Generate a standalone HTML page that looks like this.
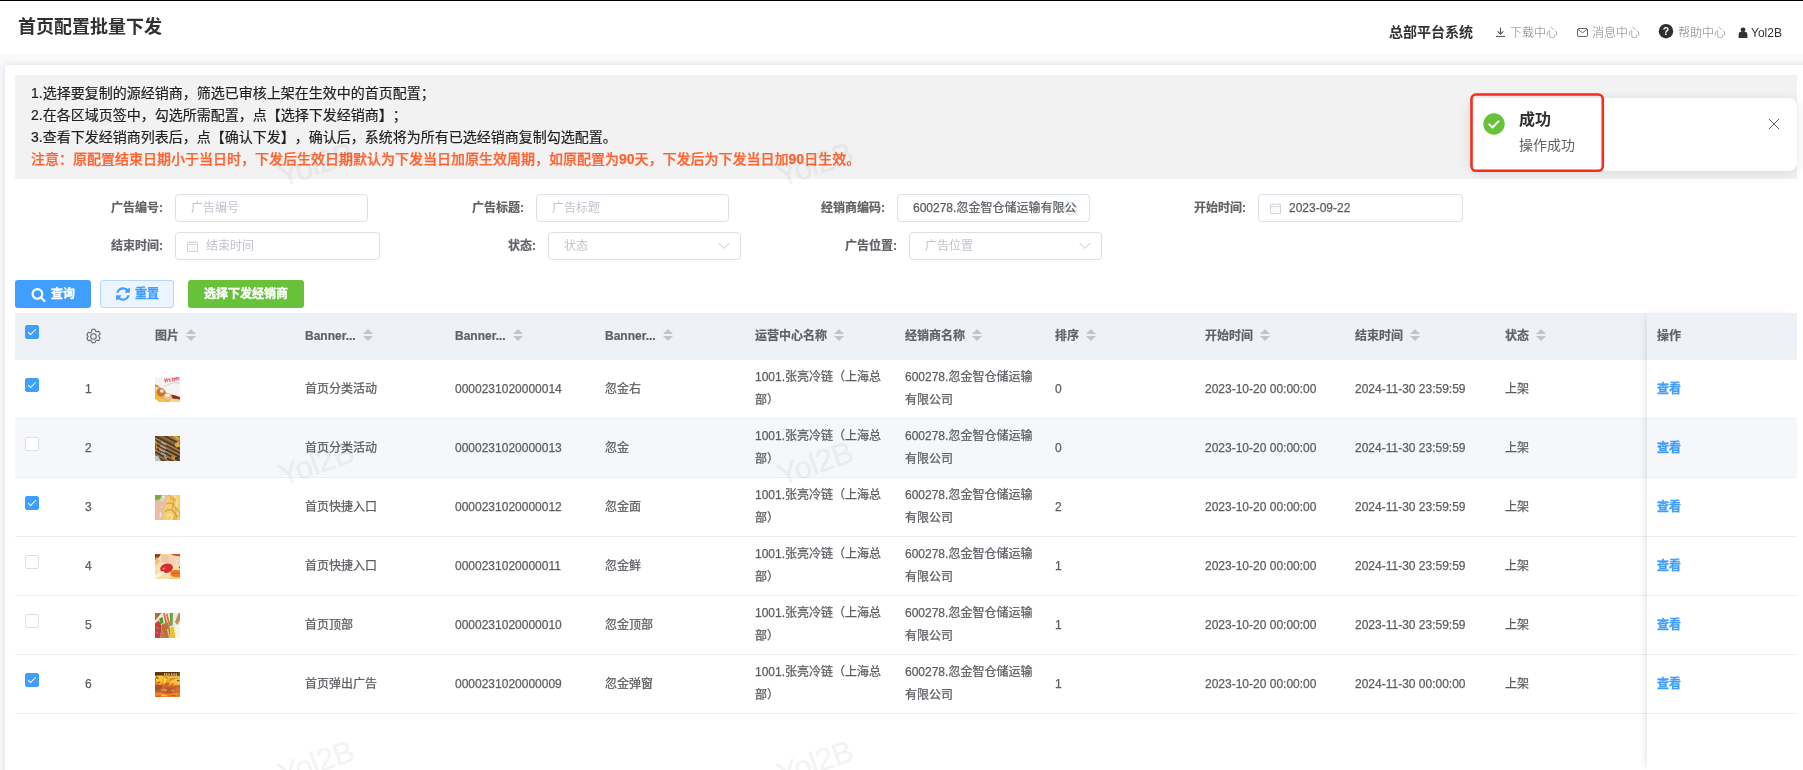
<!DOCTYPE html>
<html lang="zh-CN">
<head>
<meta charset="utf-8">
<title>首页配置批量下发</title>
<style>
*{box-sizing:border-box;margin:0;padding:0}
html,body{width:1803px;height:770px;overflow:hidden;background:#fff}
body{text-spacing-trim:space-all;font-family:"Liberation Sans","Noto Sans CJK SC",sans-serif;font-size:12px;color:#606266;position:relative}
#app{position:absolute;left:0;top:0;width:1803px;height:770px;overflow:hidden;will-change:transform;background:#fff}
.abs{position:absolute}
#topline{left:0;top:0;width:1803px;height:1px;background:#000}
#hdr{left:0;top:1px;width:1803px;height:53px;background:#fff}
#band{left:0;top:54px;width:1803px;height:11px;background:#f8f9fb}
#leftbg{left:0;top:65px;width:5px;height:705px;background:#f8f9fb}
#card{left:5px;top:65px;width:1810px;height:720px;background:#fff;border-radius:4px;box-shadow:0 0 6px rgba(70,80,120,.16)}
#title{left:18px;top:14px;font-size:18px;font-weight:700;color:#303133;line-height:26px;white-space:nowrap}
.hitem{top:25px;line-height:16px;font-size:12px;white-space:nowrap;color:#7d7d7d;font-weight:300}
#sysname{left:1389px;top:23px;font-size:14px;font-weight:700;color:#303133;line-height:18px;white-space:nowrap}
#notice{left:15px;top:75px;width:1782px;height:104px;background:#f2f2f2}
#notice p{position:absolute;left:16px;font-size:14px;line-height:22px;color:#1f1f1f;white-space:nowrap;-webkit-text-stroke:.2px #1f1f1f}
#notice p.warn{color:#ff6330;font-weight:500;-webkit-text-stroke:.25px #ff6330}
.lbl{-webkit-text-stroke:.2px #606266;font-weight:700;color:#606266;font-size:12px;line-height:28px;text-align:right;white-space:nowrap}
.inp{height:28px;border:1px solid #dcdfe6;border-radius:4px;background:#fff;font-size:12px;line-height:26px;color:#c0c4cc;white-space:nowrap;overflow:hidden}
.inp.val{color:#5c5e62;-webkit-text-stroke:.25px #5c5e62}
.btn{-webkit-text-stroke:.3px currentColor;top:280px;height:28px;border-radius:3px;font-size:12px;font-weight:700;line-height:28px;white-space:nowrap;text-align:center}
#thead{left:15px;top:313px;width:1782px;height:47px;background:#eef1f6;border-bottom:1px solid #ebeef5}
.th{-webkit-text-stroke:.2px #606266;top:0;height:46px;line-height:46px;font-weight:700;font-size:12px;color:#606266;white-space:nowrap}
.row{left:15px;width:1782px;height:59px;border-bottom:1px solid #ebeef5}
.row.hov{background:#f5f7fa}
.c{position:absolute;font-size:12px;color:#5c5e62;line-height:23px;white-space:nowrap;-webkit-text-stroke:.25px #5c5e62}
.c1{top:18px}
.c2{top:6px}
.cb{position:absolute;left:10px;width:14px;height:14px;border:1px solid #dcdfe6;border-radius:2px;background:#fff}
.cb.on{background:#409eff;border-color:#409eff}
.cb.on:after{content:"";position:absolute;left:4px;top:1px;width:3px;height:7px;border:1px solid #fff;border-left:0;border-top:0;transform:rotate(45deg)}
.sort{display:inline-block;position:relative;width:10px;height:14px;vertical-align:middle;margin-left:7px;top:-1.5px}
.sort:before,.sort:after{content:"";position:absolute;left:0;border:5px solid transparent}
.sort:before{top:-4px;border-bottom-color:#c0c4cc}
.sort:after{top:8px;border-top-color:#c0c4cc}
#fixed{left:1647px;top:313px;width:150px;height:457px;background:transparent;box-shadow:-4px 0 8px -4px rgba(0,0,0,.15)}
.lnk{color:#409eff;font-weight:700;-webkit-text-stroke:.3px #409eff}
.wm{position:absolute;width:80px;text-align:center;font-size:31px;letter-spacing:-.4px;color:rgba(0,0,0,.042);-webkit-text-stroke:.4px rgba(0,0,0,.042);transform:rotate(-19deg);transform-origin:50% 50%;white-space:nowrap;pointer-events:none;line-height:32px}
</style>
</head>
<body>
<div id="app">
<div id="topline" class="abs"></div>
<div id="hdr" class="abs"></div>
<div id="band" class="abs"></div>
<div id="leftbg" class="abs"></div>
<div id="card" class="abs"></div>

<div id="title" class="abs">首页配置批量下发</div>
<div id="sysname" class="abs">总部平台系统</div>
<div class="abs hitem" style="left:1510px">下载中心</div>
<div class="abs hitem" style="left:1592px">消息中心</div>
<div class="abs hitem" style="left:1678px">帮助中心</div>
<div class="abs hitem" style="left:1751px;color:#303133;font-weight:400">Yol2B</div>

<svg class="abs" style="left:1495px;top:27px" width="11" height="11" viewBox="0 0 11 11" fill="none" stroke="#555" stroke-width="1.1"><path d="M5.5 0.8v6.2M2.6 4.3l2.9 2.9 2.9-2.9M1 9.5h9"/></svg>
<svg class="abs" style="left:1576px;top:27px" width="13" height="11" viewBox="0 0 13 11" fill="none" stroke="#666" stroke-width="1"><rect x="1.5" y="1.5" width="10" height="8" rx="1.5"/><path d="M2 2.4l4.5 3.4L11 2.4"/></svg>
<svg class="abs" style="left:1658px;top:23px" width="16" height="16" viewBox="0 0 16 16"><circle cx="8" cy="8.2" r="7.2" fill="#2f2f2f"/><text x="8" y="12" font-family="Liberation Sans, sans-serif" font-weight="700" font-size="10.5" text-anchor="middle" fill="#fff">?</text></svg>
<svg class="abs" style="left:1738px;top:27px" width="10" height="11" viewBox="0 0 10 11" fill="#333"><circle cx="5" cy="2.8" r="2.4"/><path d="M0.6 10.8V7.4q0-2.2 2.2-2.6h4.4q2.2.4 2.2 2.6v3.4q0 .2-.4.2H1q-.4 0-.4-.2z"/></svg>
<div id="notice" class="abs">
<p style="top:7px">1.选择要复制的源经销商，筛选已审核上架在生效中的首页配置；</p>
<p style="top:29px">2.在各区域页签中，勾选所需配置，点【选择下发经销商】；</p>
<p style="top:51px">3.查看下发经销商列表后，点【确认下发】，确认后，系统将为所有已选经销商复制勾选配置。</p>
<p class="warn" style="top:73px">注意：原配置结束日期小于当日时，下发后生效日期默认为下发当日加原生效周期，如原配置为<b>90</b>天，下发后为下发当日加<b>90</b>日生效。</p>
</div>

<!-- FILTERS -->
<div id="filters">
<div class="abs lbl" style="left:63px;top:194px;width:100px">广告编号:</div>
<div class="abs inp" style="left:175px;top:194px;width:193px;padding-left:15px">广告编号</div>
<div class="abs lbl" style="left:424px;top:194px;width:100px">广告标题:</div>
<div class="abs inp" style="left:536px;top:194px;width:193px;padding-left:15px">广告标题</div>
<div class="abs lbl" style="left:785px;top:194px;width:100px">经销商编码:</div>
<div class="abs inp val" style="left:897px;top:194px;width:193px;padding-left:15px"><span style="display:block;width:163.5px;overflow:hidden">600278.忽金智仓储运输有限公司</span><svg class="abs" style="left:163px;top:5px" width="18" height="18" viewBox="0 0 18 18" fill="none" stroke="#cfdbe8" stroke-width="1"><circle cx="9.6" cy="8.5" r="6.2"/><path d="M14 12.900l2.700 2.700"/></svg></div>
<div class="abs lbl" style="left:1146px;top:194px;width:100px">开始时间:</div>
<div class="abs inp val" style="left:1258px;top:194px;width:205px;padding-left:30px">2023-09-22<svg class="abs" style="left:11px;top:8px" width="11" height="11" viewBox="0 0 11 11" fill="none" stroke="#cdd0d8" stroke-width=".9"><rect x=".500" y="1.300" width="10" height="9.200" rx=".400"/><path d="M.500 3.600h10M2.700 .300v1.600M8.300 .300v1.600"/><path d="M3 5.400v1M5.500 5.400v1M8 5.400v1M3 7.600v1M5.500 7.600v1M8 7.600v1" stroke-width=".8" stroke="#d8dbe1"/></svg></div>
<div class="abs lbl" style="left:63px;top:232px;width:100px">结束时间:</div>
<div class="abs inp" style="left:175px;top:232px;width:205px;padding-left:30px">结束时间<svg class="abs" style="left:11px;top:8px" width="11" height="11" viewBox="0 0 11 11" fill="none" stroke="#cdd0d8" stroke-width=".9"><rect x=".500" y="1.300" width="10" height="9.200" rx=".400"/><path d="M.500 3.600h10M2.700 .300v1.600M8.300 .300v1.600"/><path d="M3 5.400v1M5.500 5.400v1M8 5.400v1M3 7.600v1M5.500 7.600v1M8 7.600v1" stroke-width=".8" stroke="#d8dbe1"/></svg></div>
<div class="abs lbl" style="left:436px;top:232px;width:100px">状态:</div>
<div class="abs inp" style="left:548px;top:232px;width:193px;padding-left:15px">状态<svg class="abs" style="left:168.5px;top:8.500px" width="12" height="8" viewBox="0 0 12 8" fill="none" stroke="#c4c7cf" stroke-width="1"><path d="M.600 1l5.400 5.400L11.400 1"/></svg></div>
<div class="abs lbl" style="left:797px;top:232px;width:100px">广告位置:</div>
<div class="abs inp" style="left:909px;top:232px;width:193px;padding-left:15px">广告位置<svg class="abs" style="left:168.5px;top:8.500px" width="12" height="8" viewBox="0 0 12 8" fill="none" stroke="#c4c7cf" stroke-width="1"><path d="M.600 1l5.400 5.400L11.400 1"/></svg></div>
</div>
<!-- BUTTONS -->
<div id="buttons">
<div class="abs btn" style="left:15px;width:76px;background:#409eff;color:#fff;padding-left:20px"><svg class="abs" style="left:15.500px;top:6.500px" width="15" height="15" viewBox="0 0 1792 1792" fill="#fff"><path d="M1216 832q0-185-131.500-316.500t-316.500-131.500-316.500 131.500-131.500 316.500 131.500 316.500 316.500 131.500 316.500-131.500 131.500-316.500zm512 832q0 52-38 90t-90 38q-54 0-90-38l-343-342q-179 124-399 124-143 0-273.500-55.500t-225-150-150-225-55.500-273.500 55.500-273.500 150-225 225-150 273.500-55.500 273.500 55.500 225 150 150 225 55.500 273.500q0 220-124 399l343 343q37 37 37 90z"/></svg>查询</div>
<div class="abs btn" style="left:100px;width:74px;background:#ecf5ff;border:1px solid #b3d8ff;color:#409eff;line-height:26px;padding-left:20px"><svg class="abs" style="left:13.700px;top:5.200px" width="16" height="16" viewBox="0 0 1792 1792" fill="#409eff"><path d="M1639 1056q0 5-1 7-64 268-268 434.500t-478 166.500q-146 0-282.500-55t-243.500-157l-129 129q-19 19-45 19t-45-19-19-45v-448q0-26 19-45t45-19h448q26 0 45 19t19 45-19 45l-137 137q71 66 161 102t187 36q134 0 250-65t186-179q11-17 53-117 8-23 30-23h192q13 0 22.500 9.500t9.500 22.500zm25-800v448q0 26-19 45t-45 19h-448q-26 0-45-19t-19-45 19-45l138-138q-148-137-349-137-134 0-250 65t-186 179q-11 17-53 117-8 23-30 23h-199q-13 0-22.500-9.500t-9.500-22.500v-7q65-268 270-434.500t480-166.500q146 0 284 55.500t245 156.500l130-129q19-19 45-19t45 19 19 45z"/></svg>重置</div>
<div class="abs btn" style="left:188px;width:116px;background:#67c23a;color:#fff">选择下发经销商</div>
</div>
<!-- TABLE -->
<div id="table">
<div id="thead" class="abs"><span class="cb on" style="top:12px"></span><svg class="abs" style="left:69.500px;top:15px" width="17" height="17" viewBox="0 0 16 16" fill="none" stroke="#606266" stroke-width="1"><circle cx="8" cy="8" r="2.6"/><path d="M6.6 1.2h2.8l.5 1.7 1.3.7 1.7-.5 1.4 2.4-1.2 1.3v1.4l1.2 1.3-1.4 2.4-1.7-.5-1.3.7-.5 1.7H6.6l-.5-1.7-1.3-.7-1.7.5-1.4-2.4 1.2-1.3V7.8L1.7 6.5l1.4-2.4 1.7.5 1.3-.7z" stroke-linejoin="round"/></svg><div class="abs th" style="left:140px">图片<span class="sort"></span></div><div class="abs th" style="left:290px">Banner...<span class="sort"></span></div><div class="abs th" style="left:440px">Banner...<span class="sort"></span></div><div class="abs th" style="left:590px">Banner...<span class="sort"></span></div><div class="abs th" style="left:740px">运营中心名称<span class="sort"></span></div><div class="abs th" style="left:890px">经销商名称<span class="sort"></span></div><div class="abs th" style="left:1040px">排序<span class="sort"></span></div><div class="abs th" style="left:1190px">开始时间<span class="sort"></span></div><div class="abs th" style="left:1340px">结束时间<span class="sort"></span></div><div class="abs th" style="left:1490px">状态<span class="sort"></span></div></div>
<div class="abs row" style="top:360px"><span class="cb on" style="top:18px"></span><span class="c c1" style="left:70px">1</span><svg class="abs th1 thumb" style="left:140px;top:17px" width="25" height="25" viewBox="0 0 25 25"><defs><filter id="bl1" x="-10%" y="-10%" width="120%" height="120%"><feGaussianBlur stdDeviation="0.55"/></filter><clipPath id="cp1"><rect width="25" height="25"/></clipPath></defs><g clip-path="url(#cp1)"><rect width="25" height="25" fill="#f4f4f3"/><g filter="url(#bl1)"><path d="M-1 7l4 1.500 6.500 5 5 4 5.500 1.500 6 2v5h-27z" fill="#f3ae45"/><path d="M-1 11l4.500 2 2 6-1 7h-6z" fill="#f7b931"/><path d="M0 9.500l2.500 1.500-1 3z" fill="#fbe3a6"/><path d="M15 17.400l5 .800 6 2.200v3.200l-8-1.600z" fill="#8f2d1c"/><circle cx="6" cy="15.300" r="4.100" fill="#bd7444"/><ellipse cx="6.800" cy="14" rx="2.200" ry="1.800" fill="#f0dccb"/><ellipse cx="12.800" cy="19.600" rx="3.800" ry="3.300" fill="#e6c39c"/><ellipse cx="12.600" cy="18.400" rx="2" ry="1.400" fill="#faf2e8"/><path d="M4 21l6 1.500 3 3.500H3z" fill="#f6c24a"/><path d="M17 21.500l8 1v3h-12z" fill="#f5d596"/><path d="M-1 22l3.500 1 1 3h-4.500z" fill="#fdf9f2"/><path d="M0 8l3 1.500" stroke="#6f8f3a" stroke-width="1"/></g><g stroke="#dc5660" stroke-width="1.100" opacity=".85"><path d="M9.600 1.600l1 4M11.600 1.200l.900 4M13.400 2.400l2-.500M14 4.400l2-.500M17 .600l1 4M19 .300l.900 4M21 .100l1 3.600M23 0l1 3.400M9.500 3.600l5.500-1.300M16.600 2.400l7.600-1.800"/></g><path d="M8.600 9.200q7-3.400 15.500-4.200" stroke="#b9b9b9" stroke-width=".5" fill="none"/><path d="M21.500 7l3-.6" stroke="#c9c9c9" stroke-width=".7"/></g></svg><span class="c c1" style="left:290px">首页分类活动</span><span class="c c1" style="left:440px">0000231020000014</span><span class="c c1" style="left:590px">忽金右</span><span class="c c2" style="left:740px">1001.张亮冷链（上海总<br>部）</span><span class="c c2" style="left:890px">600278.忽金智仓储运输<br>有限公司</span><span class="c c1" style="left:1040px">0</span><span class="c c1" style="left:1190px">2023-10-20 00:00:00</span><span class="c c1" style="left:1340px">2024-11-30 23:59:59</span><span class="c c1" style="left:1490px">上架</span><span class="c c1 lnk" style="left:1642px">查看</span></div>
<div class="abs row hov" style="top:419px"><span class="cb" style="top:18px"></span><span class="c c1" style="left:70px">2</span><svg class="abs th2 thumb" style="left:140px;top:17px" width="25" height="25" viewBox="0 0 25 25"><defs><filter id="bl2" x="-10%" y="-10%" width="120%" height="120%"><feGaussianBlur stdDeviation="0.55"/></filter><clipPath id="cp2"><rect width="25" height="25"/></clipPath></defs><g clip-path="url(#cp2)"><rect width="25" height="25" fill="#7a5c38"/><g filter="url(#bl2)"><g stroke-linecap="butt"><path d="M-2 -1l29 15" stroke="#3b2a1b" stroke-width="1.100"/><path d="M-2 1l29 15" stroke="#b38a52" stroke-width="1"/><path d="M-2 3l29 15" stroke="#4a3420" stroke-width="1.100"/><path d="M-2 5l29 15" stroke="#a98253" stroke-width="1"/><path d="M-2 7l29 15" stroke="#35271a" stroke-width="1.100"/><path d="M-2 9l29 15" stroke="#b08a55" stroke-width="1"/><path d="M-2 11l29 15" stroke="#3d2c1c" stroke-width="1.100"/><path d="M-2 13l29 15" stroke="#a88150" stroke-width="1"/><path d="M-2 15l29 15" stroke="#3a2b1d" stroke-width="1.100"/><path d="M-2 17l29 15" stroke="#a07a4a" stroke-width="1"/><path d="M-2 19l29 15" stroke="#4b3824" stroke-width="1.100"/><path d="M2 -2l25 13" stroke="#9a733f" stroke-width="1"/><path d="M6 -2l21 11" stroke="#3f2d1c" stroke-width="1.100"/><path d="M10 -2l17 9" stroke="#b08a50" stroke-width="1"/><path d="M14 -2l13 7" stroke="#4a3520" stroke-width="1"/><path d="M18 -2l9 5" stroke="#b7852f" stroke-width="1"/></g><path d="M6 6l5 2.600M5 9.500l6 3.200M4 13l6 3.200M6 17l5 2.600M9 20.500l3 1.600" stroke="#aeb8c4" stroke-width="1.200"/><path d="M-1 19l4.500 1.500 2.500 5h-7z" fill="#bfc4ca"/><path d="M17 0h5l3 2v3l-3-1z" fill="#d9a12a"/><path d="M19.500 8l4.500-3 1 5.500-4 1z" fill="#e0b040"/><ellipse cx=".4" cy="10" rx="1.200" ry="5.500" fill="#efb32a"/><ellipse cx=".2" cy="10.500" rx=".6" ry="4" fill="#6b2b10"/><path d="M16.500 20l5 1v3l-5-1z" fill="#d98a2a"/><rect x="20" y="21" width="3.500" height="2.600" fill="#2c3a1c"/></g></g></svg><span class="c c1" style="left:290px">首页分类活动</span><span class="c c1" style="left:440px">0000231020000013</span><span class="c c1" style="left:590px">忽金</span><span class="c c2" style="left:740px">1001.张亮冷链（上海总<br>部）</span><span class="c c2" style="left:890px">600278.忽金智仓储运输<br>有限公司</span><span class="c c1" style="left:1040px">0</span><span class="c c1" style="left:1190px">2023-10-20 00:00:00</span><span class="c c1" style="left:1340px">2024-11-30 23:59:59</span><span class="c c1" style="left:1490px">上架</span><span class="c c1 lnk" style="left:1642px">查看</span></div>
<div class="abs row" style="top:478px"><span class="cb on" style="top:18px"></span><span class="c c1" style="left:70px">3</span><svg class="abs th3 thumb" style="left:140px;top:17px" width="25" height="25" viewBox="0 0 25 25"><defs><filter id="bl3" x="-10%" y="-10%" width="120%" height="120%"><feGaussianBlur stdDeviation="0.55"/></filter><clipPath id="cp3"><rect width="25" height="25"/></clipPath></defs><g clip-path="url(#cp3)"><rect width="25" height="25" fill="#e9bda3"/><g filter="url(#bl3)"><path d="M15-1q-5 6-5.500 13T8.500 26h18V-1z" fill="#f2d071"/><path d="M0 0h6.500l-1 4-5.500 1.500z" fill="#78aa3c"/><path d="M6 2l4 1-2 4-3-1z" fill="#d9d4cf"/><circle cx="8.600" cy="1.800" r="1" fill="#fff"/><g fill="none" stroke-width="1.300"><path d="M13 0q7 3 5 10t6 12" stroke="#e3a944"/><path d="M18-1q6 6 3 12t5 9" stroke="#f9e9ae"/><path d="M11 9q6-3 9 3t-3 14" stroke="#e0a43f"/><path d="M10 17q5-5 9 0t1 9" stroke="#dca040"/><path d="M12 21q3-3 5 0v5" stroke="#f7e3a0"/><path d="M15 4q4-2 6 2" stroke="#eeb14e" stroke-width="2"/><path d="M21 13q3 2 4 7" stroke="#e2a742"/></g><path d="M5.500 11l1.500.5-.5 2zM5 17l1.500 1-.5 5-1.500-1z" fill="#f3e4d6"/></g></g></svg><span class="c c1" style="left:290px">首页快捷入口</span><span class="c c1" style="left:440px">0000231020000012</span><span class="c c1" style="left:590px">忽金面</span><span class="c c2" style="left:740px">1001.张亮冷链（上海总<br>部）</span><span class="c c2" style="left:890px">600278.忽金智仓储运输<br>有限公司</span><span class="c c1" style="left:1040px">2</span><span class="c c1" style="left:1190px">2023-10-20 00:00:00</span><span class="c c1" style="left:1340px">2024-11-30 23:59:59</span><span class="c c1" style="left:1490px">上架</span><span class="c c1 lnk" style="left:1642px">查看</span></div>
<div class="abs row" style="top:537px"><span class="cb" style="top:18px"></span><span class="c c1" style="left:70px">4</span><svg class="abs th4 thumb" style="left:140px;top:17px" width="25" height="25" viewBox="0 0 25 25"><defs><filter id="bl4" x="-10%" y="-10%" width="120%" height="120%"><feGaussianBlur stdDeviation="0.55"/></filter><clipPath id="cp4"><rect width="25" height="25"/></clipPath></defs><g clip-path="url(#cp4)"><rect width="25" height="25" fill="#f3e0aa"/><g filter="url(#bl4)"><path d="M0 0h6l-2 3-4 3z" fill="#a23c1c"/><path d="M1 3l4 4-3 4-2-2z" fill="#e9c07e"/><path d="M7 .3l7.500 1.200-.8 8-8-1.500z" fill="#f3c6aa"/><path d="M15 3l10.500 1.500v7L14.500 10z" fill="#f5d0b4"/><path d="M15.500 0h10v2.600l-7-1.200z" fill="#e24c22"/><path d="M21 5l.8 6" stroke="#fbe9d8" stroke-width="1"/><ellipse cx="11.600" cy="14.200" rx="6.500" ry="4.600" fill="#d22e33" transform="rotate(-12 11.600 14.200)"/><ellipse cx="9" cy="14.500" rx="1.600" ry=".8" fill="#ee8a8a" transform="rotate(-30 9 14.500)"/><path d="M16 17q5-2 10-.5v6.500q-6 1.500-10.500-1.500z" fill="#f27a2a"/><path d="M17 19.500l8-.5" stroke="#e2481c" stroke-width=".9"/><path d="M0 21l8-4 2 2-10 6z" fill="#fbf3dc"/><path d="M15 23l11 .5v2H14z" fill="#f3cf7a"/><circle cx="24.500" cy="13.600" r=".8" fill="#e0302a"/></g></g></svg><span class="c c1" style="left:290px">首页快捷入口</span><span class="c c1" style="left:440px">0000231020000011</span><span class="c c1" style="left:590px">忽金鲜</span><span class="c c2" style="left:740px">1001.张亮冷链（上海总<br>部）</span><span class="c c2" style="left:890px">600278.忽金智仓储运输<br>有限公司</span><span class="c c1" style="left:1040px">1</span><span class="c c1" style="left:1190px">2023-10-20 00:00:00</span><span class="c c1" style="left:1340px">2024-11-30 23:59:59</span><span class="c c1" style="left:1490px">上架</span><span class="c c1 lnk" style="left:1642px">查看</span></div>
<div class="abs row" style="top:596px"><span class="cb" style="top:18px"></span><span class="c c1" style="left:70px">5</span><svg class="abs th5 thumb" style="left:140px;top:17px" width="25" height="25" viewBox="0 0 25 25"><defs><filter id="bl5" x="-10%" y="-10%" width="120%" height="120%"><feGaussianBlur stdDeviation="0.55"/></filter><clipPath id="cp5"><rect width="25" height="25"/></clipPath></defs><g clip-path="url(#cp5)"><rect width="25" height="25" fill="#efe9dd"/><g filter="url(#bl5)"><path d="M0 0h6.500L0 7.500z" fill="#b06a3c"/><path d="M0 10.500l3.600-3 2.800 5-1 13H0z" fill="#c2403f"/><path d="M1 14l3 2M.5 19l3 1.500" stroke="#dd7474" stroke-width=".9"/><path d="M4.200 5.500l3.500-1.500.8 6-3.300 1.200z" fill="#4f9a2c"/><path d="M8 0h2l3.500 14h-2.400zM10.800.8h1.800l3 12.500h-1.800z" fill="#de6a48"/><path d="M10 0l3.300 13" stroke="#f3d5c6" stroke-width=".6"/><path d="M6.500 11.500l6-2.500 2.500 6.500.5 10h-10z" fill="#bf7a45"/><path d="M8 13l4 11M10.500 12l3.500 12" stroke="#7c4a2a" stroke-width=".9" stroke-dasharray="1.500 1.200"/><path d="M12.500 16l2 9" stroke="#d9bca6" stroke-width="1.400"/><path d="M14.800 0h3l-.300 12.500h-2.200z" fill="#3f8a1e"/><path d="M16.200 0v12" stroke="#9acc6a" stroke-width=".8"/><path d="M15.200 14.500q2-1.800 3.800-.5l1.200 11.500h-5.200z" fill="#f1c92f"/><path d="M16 17l3 .5M16 20l3.500.5M16 23l3.500.5" stroke="#d9a020" stroke-width=".6"/><path d="M20 9l3.800-9.500h2V5l-3.500 7z" fill="#c28b52"/><path d="M20.500 13l4.500-3v16h-4.500z" fill="#f6f3ea"/></g></g></svg><span class="c c1" style="left:290px">首页顶部</span><span class="c c1" style="left:440px">0000231020000010</span><span class="c c1" style="left:590px">忽金顶部</span><span class="c c2" style="left:740px">1001.张亮冷链（上海总<br>部）</span><span class="c c2" style="left:890px">600278.忽金智仓储运输<br>有限公司</span><span class="c c1" style="left:1040px">1</span><span class="c c1" style="left:1190px">2023-10-20 00:00:00</span><span class="c c1" style="left:1340px">2023-11-30 23:59:59</span><span class="c c1" style="left:1490px">上架</span><span class="c c1 lnk" style="left:1642px">查看</span></div>
<div class="abs row" style="top:655px"><span class="cb on" style="top:18px"></span><span class="c c1" style="left:70px">6</span><svg class="abs th6 thumb" style="left:140px;top:17px" width="25" height="25" viewBox="0 0 25 25"><defs><filter id="bl6" x="-10%" y="-10%" width="120%" height="120%"><feGaussianBlur stdDeviation="0.55"/></filter><clipPath id="cp6"><rect width="25" height="25"/></clipPath></defs><g clip-path="url(#cp6)"><rect width="25" height="25" fill="#e4862a"/><g filter="url(#bl6)"><rect x="-1" y="-1" width="27" height="4.600" fill="#5b3612"/><path d="M9 1.300h1.300v2.400H9zM11 1.300h1.300v2.400H11zM13.400 1.300h1.300v2.400h-1.300zM16 1.300h1.300v2.400H16zM18.400 1.300h1.300v2.400h-1.300zM20.600 1.300h1.300v2.400h-1.300zM14.500 4.300h10.500v1.800H14.500z" fill="#e6c25e"/><rect x="23.300" y=".5" width="1.400" height="2.400" fill="#3d8a1c"/><path d="M0 4.500q6-2 9 0l-2 7-7 1z" fill="#fbc531"/><path d="M9.500 5q3-1.500 5 0l-4.500 6.500-2-.5z" fill="#fde04a"/><path d="M15 10q3-4 10-3.500v6l-10 1z" fill="#f9c53a"/><path d="M10 9l5-3 1 5z" fill="#f4a42c"/><path d="M1 5.500l2.500.8M10.500 5.800l2.200.4M22 8.500l2.500.5" stroke="#3a2a12" stroke-width=".9"/><path d="M1.500 11l4-.8M10 12.300l3.500-.5M16 13l3-1.500" stroke="#e2431e" stroke-width="1.300"/><rect x="-1" y="6" width="1.800" height="8" fill="#e5531f"/><path d="M-1 12.500q12 1.500 27 1v7H-1z" fill="#c4642a"/><path d="M0 13.500q4-1.500 7 .5l-2 4-5 1z" fill="#a9522a"/><ellipse cx="13" cy="18.600" rx="7.500" ry="3" fill="#b9562c"/><ellipse cx="9" cy="18" rx="3" ry="1.600" fill="#d98a55"/><ellipse cx="18" cy="18.500" rx="2.500" ry="1.600" fill="#d27a48"/><path d="M21 15l5 1v5l-5-1z" fill="#d9702a"/><path d="M-1 21.500q12 2 27-.5v5H-1z" fill="#ee8a2a"/><path d="M1 24.300l5-.3M16 23.600l5 .4" stroke="#e0401c" stroke-width="1"/><path d="M6 23l5 .5" stroke="#fbd14a" stroke-width="1"/><circle cx="14.300" cy="24" r=".7" fill="#4a9a20"/><circle cx="23.300" cy="23.300" r=".7" fill="#4a9a20"/><circle cx="18" cy="23.300" r=".6" fill="#4a9a20"/></g></g></svg><span class="c c1" style="left:290px">首页弹出广告</span><span class="c c1" style="left:440px">0000231020000009</span><span class="c c1" style="left:590px">忽金弹窗</span><span class="c c2" style="left:740px">1001.张亮冷链（上海总<br>部）</span><span class="c c2" style="left:890px">600278.忽金智仓储运输<br>有限公司</span><span class="c c1" style="left:1040px">1</span><span class="c c1" style="left:1190px">2023-10-20 00:00:00</span><span class="c c1" style="left:1340px">2024-11-30 00:00:00</span><span class="c c1" style="left:1490px">上架</span><span class="c c1 lnk" style="left:1642px">查看</span></div>
<div id="fixed" class="abs"></div>
<div class="abs th" style="left:1657px;top:313px">操作</div>
</div>
<!-- NOTIFY -->
<div id="notify">
<div class="abs" style="left:1470px;top:98px;width:327px;height:73px;background:#fff;border-radius:8px;box-shadow:0 2px 12px rgba(0,0,0,.1)"></div>
<svg class="abs" style="left:1483px;top:113px" width="22" height="22" viewBox="0 0 22 22"><circle cx="11" cy="11" r="10.7" fill="#67c23a"/><path d="M6.2 11.3l3.3 3.2 6.2-6.3" fill="none" stroke="#fff" stroke-width="1.8" stroke-linecap="round" stroke-linejoin="round"/></svg>
<div class="abs" style="left:1519px;top:108px;font-size:16px;font-weight:700;color:#303133;line-height:24px;white-space:nowrap">成功</div>
<div class="abs" style="left:1519px;top:135px;font-size:14px;color:#606266;line-height:21px;white-space:nowrap">操作成功</div>
<svg class="abs" style="left:1768px;top:118px" width="12" height="12" viewBox="0 0 12 12" fill="none" stroke="#606266" stroke-width="1"><path d="M1 1l10 10M11 1L1 11"/></svg>
<svg class="abs" style="left:1465px;top:90px" width="145" height="86" viewBox="0 0 145 86" fill="none"><rect x="6.5" y="4.5" width="131.3" height="76.3" rx="4.5" stroke="#fa2a1c" stroke-width="2.6"/></svg>
</div>
<div id="wms">
<div class="wm" style="left:275.7px;top:148.9px">Yol2B</div>
<div class="wm" style="left:774.7px;top:148.9px">Yol2B</div>
<div class="wm" style="left:275.7px;top:448.0px">Yol2B</div>
<div class="wm" style="left:774.7px;top:448.0px">Yol2B</div>
<div class="wm" style="left:275.7px;top:747.1px">Yol2B</div>
<div class="wm" style="left:774.7px;top:747.1px">Yol2B</div>
</div>
</div>
</body>
</html>
